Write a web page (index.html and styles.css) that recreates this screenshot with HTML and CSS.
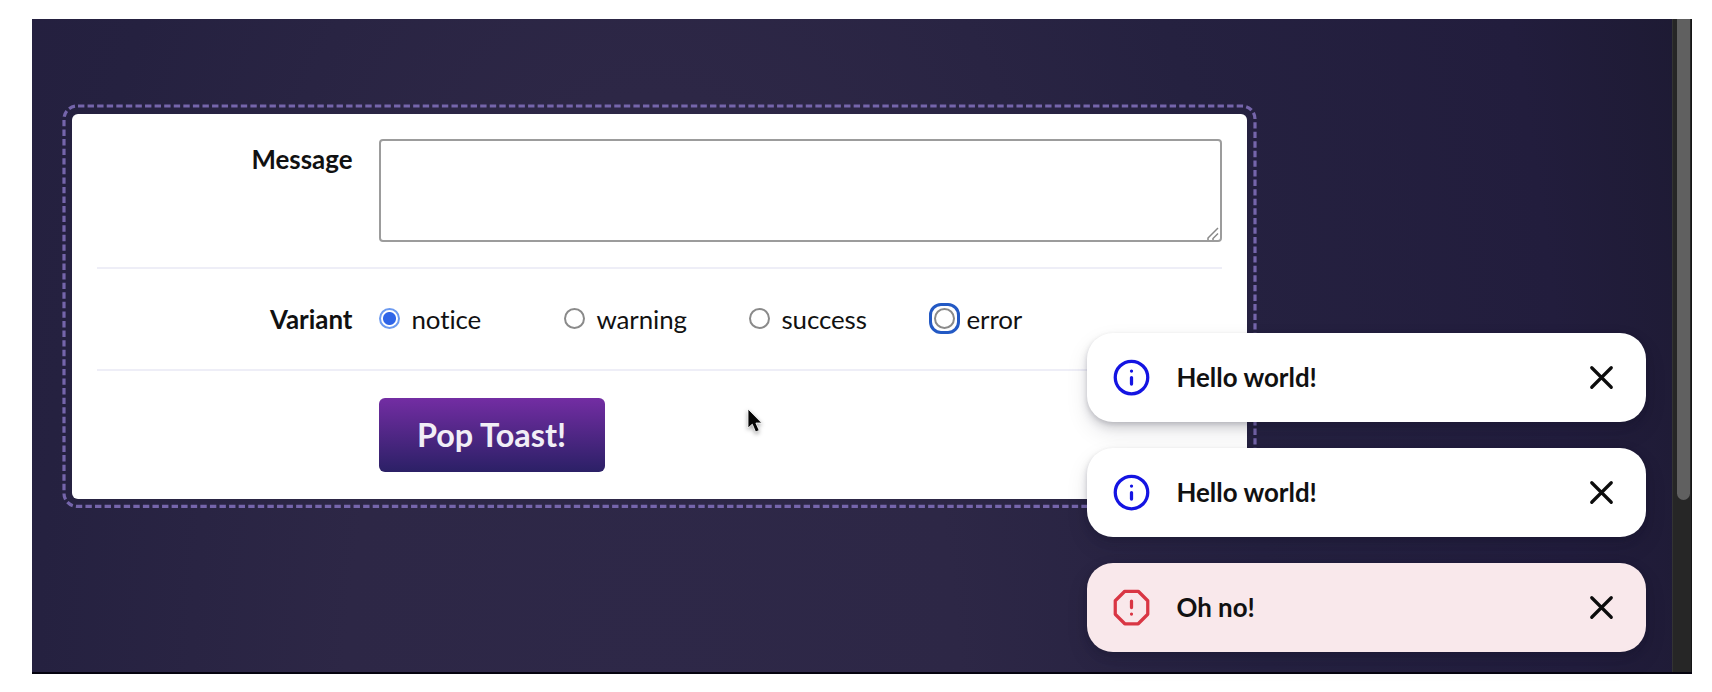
FILE: index.html
```html
<!DOCTYPE html>
<html lang="en">
<head>
<meta charset="utf-8">
<title>Toast Playground</title>
<link rel="stylesheet" href="styles.css">
</head>
<body>
<div class="window">
  <main class="page">
    <form class="card">
      <svg class="card-outline" width="1199" height="409" viewBox="0 0 1199 409" aria-hidden="true">
        <rect x="4" y="4" width="1191" height="400.4" rx="13"/>
      </svg>
      <div class="row row-message">
        <label class="label" for="message">Message</label>
        <div class="field">
          <textarea class="message" id="message"></textarea>
          <svg class="grip" width="12" height="13" viewBox="0 0 12 13" aria-hidden="true"><path d="M1 13V11L11 1M6 13V11.500L11 6.500"/></svg>
        </div>
      </div>
      <div class="row row-variant">
        <div class="label">Variant</div>
        <div class="options">
          <label class="option"><span class="radio radio-checked"></span>notice</label>
          <label class="option"><span class="radio"></span>warning</label>
          <label class="option"><span class="radio"></span>success</label>
          <label class="option"><span class="radio radio-focus"></span>error</label>
        </div>
      </div>
      <div class="row row-action">
        <div class="label"></div>
        <button class="button" type="button">Pop Toast!</button>
      </div>
    </form>
    <ol class="toasts">
      <li class="toast">
        <svg class="icon notice" viewBox="0 0 24 24"><circle cx="12" cy="12" r="10"/><path d="M12 16v-4M12 8h.01"/></svg>
        <p class="toast-text">Hello world!</p>
        <svg class="icon close" viewBox="0 0 24 24"><path d="M18 6 6 18M6 6l12 12"/></svg>
      </li>
      <li class="toast">
        <svg class="icon notice" viewBox="0 0 24 24"><circle cx="12" cy="12" r="10"/><path d="M12 16v-4M12 8h.01"/></svg>
        <p class="toast-text">Hello world!</p>
        <svg class="icon close" viewBox="0 0 24 24"><path d="M18 6 6 18M6 6l12 12"/></svg>
      </li>
      <li class="toast toast-error">
        <svg class="icon error" viewBox="0 0 24 24"><path d="M7.860 2h8.280L22 7.860v8.280L16.140 22H7.860L2 16.140V7.860zM12 8v4M12 16h.01"/></svg>
        <p class="toast-text">Oh no!</p>
        <svg class="icon close" viewBox="0 0 24 24"><path d="M18 6 6 18M6 6l12 12"/></svg>
      </li>
    </ol>
    <svg class="cursor" width="24" height="32" viewBox="0 0 24 32" aria-hidden="true"><path d="M4 3V22L8.300 18.200L11.600 26L15.200 24.400L11.900 17H17.800Z"/></svg>
  </main>
  <div class="scrollbar"><div class="thumb"></div></div>
</div>
</body>
</html>
```
FILE: styles.css
```css
* { box-sizing: border-box; }
body {
  margin: 0;
  height: 692px;
  padding: 19px 20px 18px 32px;
  overflow: hidden;
  background: #fff;
  color: #111;
  font: 25.9px/1.5 Lato, sans-serif;
  font-variant-ligatures: none;
}
.window {
  display: flex;
  height: 655px;
  border-bottom: 2px solid #05030f;
}
.page {
  position: relative;
  flex: 1;
  padding: 95px 0 0 40px;
  background: radial-gradient(1100px 2300px at 620px 720px, #2e2848 0%, #2d2746 28%, #252140 56%, #221d3d 84%, #1d1a32 101%);
}
.scrollbar {
  width: 20px;
  padding: 0 1px 0 4px;
  background: #262626;
  border-left: 1px solid #333;
  border-right: 1px solid #151515;
}
.thumb {
  height: 481px;
  background: #606060;
  border-radius: 0 0 7px 7px;
}
.card {
  position: relative;
  width: 1174.500px;
  height: 385px;
  padding: 25px 25px 0 25px;
  background: #fff;
  border-radius: 6px;
}
.card-outline {
  position: absolute;
  left: -12px;
  top: -12px;
  fill: none;
  stroke: #7565ab;
  stroke-width: 3.2;
  stroke-dasharray: 6.384 3.192;
  stroke-dashoffset: -1;
}
.row {
  display: grid;
  grid-template-columns: 255.500px 1fr;
  column-gap: 26px;
}
.row-message {
  height: 130px;
  border-bottom: 2px solid #eeeef7;
}
.row-variant {
  height: 102px;
  align-items: center;
  border-bottom: 2px solid #eeeef7;
}
.row-action { padding-top: 27px; }
.label {
  text-align: right;
  font-weight: 700;
}
.row-message .label { padding-top: 1px; }
.field { position: relative; height: 103px; }
.message {
  display: block;
  width: 100%;
  height: 103px;
  resize: none;
  outline: none;
  background: #fff;
  border: 2px solid #9c9c9c;
  border-radius: 4px;
}
.grip {
  position: absolute;
  right: 3px;
  bottom: 2px;
  fill: none;
  stroke: #888;
  stroke-width: 1.5;
}
.options { display: grid; grid-template-columns: repeat(4, 185px); }
.option { display: flex; align-items: center; gap: 12px; letter-spacing: -.1px; }
.radio {
  width: 21px;
  height: 21px;
  border: 2px solid #8a8a8a;
  border-radius: 50%;
}
.radio-checked {
  border-color: #6c9af0;
  background: radial-gradient(circle, #2f65e8 6px, #fff 7px);
}
.radio-focus { position: relative; }
.radio-focus::after {
  content: "";
  position: absolute;
  inset: -7px;
  border: 3px solid #2359c4;
  border-radius: 12px;
}
.button {
  width: 226px;
  height: 74px;
  padding: 0;
  border: 0;
  border-radius: 6px;
  background: linear-gradient(#732da3, #2b2066);
  color: #f1eef6;
  font: 700 32.400px/74px Lato, sans-serif;
}
.toasts {
  position: absolute;
  top: 313.500px;
  right: 26px;
  width: 559px;
  display: grid;
  gap: 25.500px;
  margin: 0;
  padding: 0;
  list-style: none;
}
.toast {
  display: flex;
  align-items: center;
  height: 89.500px;
  padding: 0 25px;
  background: #fff;
  border-radius: 26px;
  font-weight: 700;
  box-shadow: 0 2px 4px rgba(20, 18, 40, .12), 0 5px 10px rgba(20, 18, 40, .14), 0 10px 22px rgba(20, 18, 40, .1);
}
.toast-error { background: #f9e8eb; }
.toast-text { flex: 1; margin: 0 0 0 25.500px; }
.icon {
  width: 39px;
  height: 39px;
  fill: none;
  stroke: currentColor;
  stroke-width: 2;
  stroke-linecap: round;
  stroke-linejoin: round;
}
.notice { color: #1414e2; }
.error { color: #d93644; }
.close { color: #0c0c0c; }
.cursor {
  position: absolute;
  left: 712px;
  top: 387px;
  fill: #050505;
  stroke: #fff;
  stroke-width: .8;
  filter: drop-shadow(0 2px 2px rgba(0, 0, 0, .35));
}
```
